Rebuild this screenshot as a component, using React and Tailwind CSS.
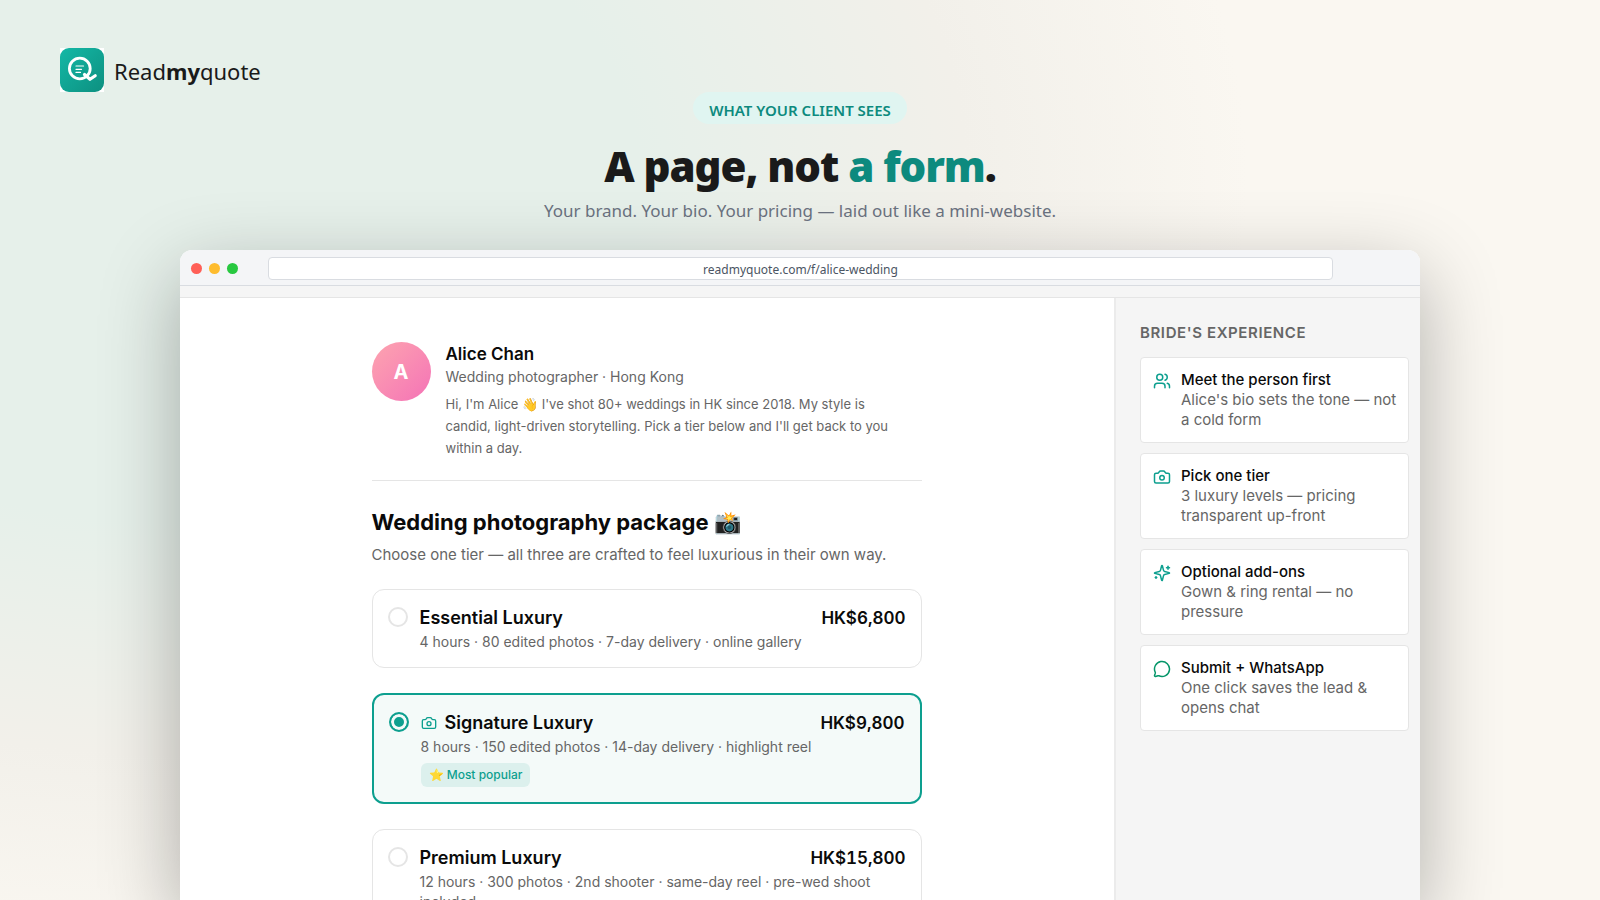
import React, { useState } from 'react'
import { Users, Camera, MessageCircle } from 'lucide-react'

const Sparkles = ({ className }) => (
  <svg
    className={className}
    viewBox="0 0 24 24"
    fill="none"
    stroke="currentColor"
    strokeWidth="2"
    strokeLinecap="round"
    strokeLinejoin="round"
  >
    <path d="M9.937 15.5A2 2 0 0 0 8.5 14.063l-6.135-1.582a.5.5 0 0 1 0-.962L8.5 9.936A2 2 0 0 0 9.937 8.5l1.582-6.135a.5.5 0 0 1 .963 0L14.063 8.5A2 2 0 0 0 15.5 9.937l6.135 1.581a.5.5 0 0 1 0 .964L15.5 14.063a2 2 0 0 0-1.437 1.437l-1.582 6.135a.5.5 0 0 1-.963 0z" />
    <path d="M20 3v4" />
    <path d="M22 5h-4" />
    <path d="M4 17v2" />
    <path d="M5 18H3" />
  </svg>
)

const tiers = [
  {
    id: 'essential',
    name: 'Essential Luxury',
    price: 'HK$6,800',
    details: '4 hours · 80 edited photos · 7-day delivery · online gallery'
  },
  {
    id: 'signature',
    name: 'Signature Luxury',
    price: 'HK$9,800',
    details: '8 hours · 150 edited photos · 14-day delivery · highlight reel',
    icon: Camera,
    badge: '⭐ Most popular'
  },
  {
    id: 'premium',
    name: 'Premium Luxury',
    price: 'HK$15,800',
    details: '12 hours · 300 photos · 2nd shooter · same-day reel · pre-wed shoot included'
  }
]

const steps = [
  { icon: Users, color: 'text-[#0d9f8f]', title: 'Meet the person first', text: "Alice's bio sets the tone — not a cold form" },
  { icon: Camera, color: 'text-[#0d9f8f]', title: 'Pick one tier', text: '3 luxury levels — pricing transparent up-front' },
  { icon: Sparkles, color: 'text-[#0d9f8f]', title: 'Optional add-ons', text: 'Gown & ring rental — no pressure' },
  { icon: MessageCircle, color: 'text-[#059669]', title: 'Submit + WhatsApp', text: 'One click saves the lead & opens chat' }
]

const Logo = () => (
  <a href="#" className="flex items-center gap-[10px] self-start">
    <span className="bg-white">
      <svg className="w-11 h-11" viewBox="0 0 44 44" fill="none">
        <defs>
          <linearGradient id="logo-bg" x1="0" y1="0" x2="44" y2="44" gradientUnits="userSpaceOnUse">
            <stop stopColor="#14b8a6" />
            <stop offset="1" stopColor="#0d9080" />
          </linearGradient>
        </defs>
        <rect width="44" height="44" rx="9" fill="url(#logo-bg)" />
        <circle cx="19.8" cy="20.5" r="10.4" stroke="white" strokeWidth="2.8" />
        <path d="M24.5 26.5l5.5 4.8 5.2-3.6" stroke="white" strokeWidth="3.2" strokeLinecap="round" strokeLinejoin="round" />
        <path d="M16 18h7.5M16 21.3h5.5M16 24.4h4.5" stroke="white" strokeWidth="1.2" strokeLinecap="round" />
      </svg>
    </span>
    <span className="pt-0.5 text-[22px] leading-8">Read<b>my</b>quote</span>
  </a>
)

const TierCard = ({ tier, selected, onSelect }) => {
  const Icon = tier.icon
  return (
    <label
      htmlFor={tier.id}
      className={`flex items-start gap-3 rounded-xl px-[15px] pt-4 pb-[15px] ${selected ? 'border-2 border-[#0d9f8f] bg-[#f4faf9]' : 'border border-[#e5e5e5] bg-white'}`}
    >
      <input
        type="radio"
        name="tier"
        id={tier.id}
        checked={selected}
        onChange={() => onSelect(tier.id)}
        className="appearance-none shrink-0 w-5 h-5 mt-px rounded-full border-2 border-[#e5e5e5] checked:border-[#0d9f8f] checked:bg-[#0d9f8f] checked:shadow-[inset_0_0_0_3px_#f4faf9]"
      />
      <span className="flex-1">
        <span className="flex items-center gap-2 leading-6 font-semibold text-[#0a0a0a]">
          {Icon && <Icon className="w-4 h-4 text-[#0d9f8f]" />}
          <span className="text-lg leading-6">{tier.name}</span>
          <span className="ml-auto text-[17px] leading-6 tabular-nums">{tier.price}</span>
        </span>
        <span className="block text-sm leading-5 mt-0.5 text-[#666]">{tier.details}</span>
        {tier.badge && (
          <span className="inline-block mt-[6px] px-2 rounded-md bg-[#dcf0ed] text-xs leading-6 font-medium text-[#0d9f8f]">
            {tier.badge}
          </span>
        )}
      </span>
    </label>
  )
}

const App = () => {
  const [selected, setSelected] = useState('signature')

  return (
    <div className="h-screen overflow-hidden flex flex-col bg-[#faf7f1] bg-[radial-gradient(68%_86%_at_10%_20%,#e6f0ea_44%,#f2f0ea_74%,#faf7f1_100%)] font-['Noto_Sans',sans-serif] text-[#1a1a1a]">
      <header className="flex flex-col px-[60px] pt-12">
        <Logo />
        <div className="flex flex-col items-center text-center">
          <span className="rounded-full bg-[#e0f5f1] px-4 pt-[6px] pb-[2px] text-[15px] leading-6 font-semibold text-[#0d8a7e]">
            WHAT YOUR CLIENT SEES
          </span>
          <h1 className="mt-4 text-[42px] leading-[52px] font-black tracking-tight">
            A page, not <span className="text-[#0d8a7e]">a form</span>.
          </h1>
          <p className="mt-[7px] text-[17px] leading-6 text-[#6b7280]">
            Your brand. Your bio. Your pricing — laid out like a mini-website.
          </p>
        </div>
      </header>

      <div className="flex-1 min-h-0 mt-[27px] mx-[180px] flex flex-col rounded-t-xl overflow-hidden bg-white shadow-[0_25px_80px_rgba(0,0,0,0.3)]">
        <div className="flex items-center h-9 shrink-0 px-[11px] pt-0.5 bg-[#f4f5f7] border-b border-[#d9dce1]">
          <div className="flex gap-[7px] w-[77px]">
            <span className="w-[11px] h-[11px] rounded-full bg-[#ff5f57]" />
            <span className="w-[11px] h-[11px] rounded-full bg-[#febc2e]" />
            <span className="w-[11px] h-[11px] rounded-full bg-[#28c840]" />
          </div>
          <input
            type="text"
            readOnly
            aria-label="Address"
            value="readmyquote.com/f/alice-wedding"
            className="flex-1 h-[23px] mr-[76px] pt-0.5 rounded-sm border border-[#d9dce1] bg-white text-center text-xs text-[#4b5563] outline-none"
          />
        </div>
        <div className="h-3 shrink-0 bg-[#f5f5f5] border-b border-[#e5e5e5]" />

        <div className="flex-1 min-h-0 flex font-[Inter,sans-serif]">
          <main className="flex-1 pt-11 pr-px">
            <div className="max-w-[550px] mx-auto">
              <section className="flex gap-[15px] pb-[21px] border-b border-[#e5e5e5]">
                <div className="w-[59px] h-[59px] shrink-0 rounded-full flex items-center justify-center bg-linear-to-br from-[#fda4af] to-[#f472b6] text-white text-xl font-bold">
                  A
                </div>
                <div className="text-[#666]">
                  <h2 className="text-[17px] leading-6 font-semibold text-[#0a0a0a]">Alice Chan</h2>
                  <p className="text-sm leading-[22px]">Wedding photographer · Hong Kong</p>
                  <p className="mt-[5px] max-w-[460px] text-[13px] leading-[22px]">
                    Hi, I'm Alice 👋 I've shot 80+ weddings in HK since 2018. My style is candid, light-driven
                    storytelling. Pick a tier below and I'll get back to you within a day.
                  </p>
                </div>
              </section>

              <h2 className="mt-[25px] text-[22px] leading-8 font-bold text-[#0a0a0a]">Wedding photography package 📸</h2>
              <p className="mt-[5px] text-[15px] leading-6 text-[#666]">
                Choose one tier — all three are crafted to feel luxurious in their own way.
              </p>

              <div className="mt-[22px] flex flex-col gap-[25px]">
                {tiers.map((tier) => (
                  <TierCard key={tier.id} tier={tier} selected={selected === tier.id} onSelect={setSelected} />
                ))}
              </div>
            </div>
          </main>

          <aside className="w-[306px] shrink-0 border-l-2 border-[#ebebeb] bg-[#f5f5f5] pl-6 pr-[11px] pt-[25px]">
            <h3 className="text-[15px] leading-5 font-semibold tracking-[0.6px] text-[#666]">BRIDE'S EXPERIENCE</h3>
            <ul className="mt-[14px] flex flex-col gap-[10px]">
              {steps.map(({ icon: Icon, color, title, text }) => (
                <li key={title} className="flex gap-[10px] rounded border border-[#e5e5e5] bg-white py-3 pl-3 pr-1">
                  <Icon className={`w-[18px] h-[18px] mt-[2px] shrink-0 ${color}`} />
                  <div className="text-[15px] leading-5">
                    <p className="font-medium text-[#0a0a0a]">{title}</p>
                    <p className="text-[#666]">{text}</p>
                  </div>
                </li>
              ))}
            </ul>
          </aside>
        </div>
      </div>
    </div>
  )
}

export default App
